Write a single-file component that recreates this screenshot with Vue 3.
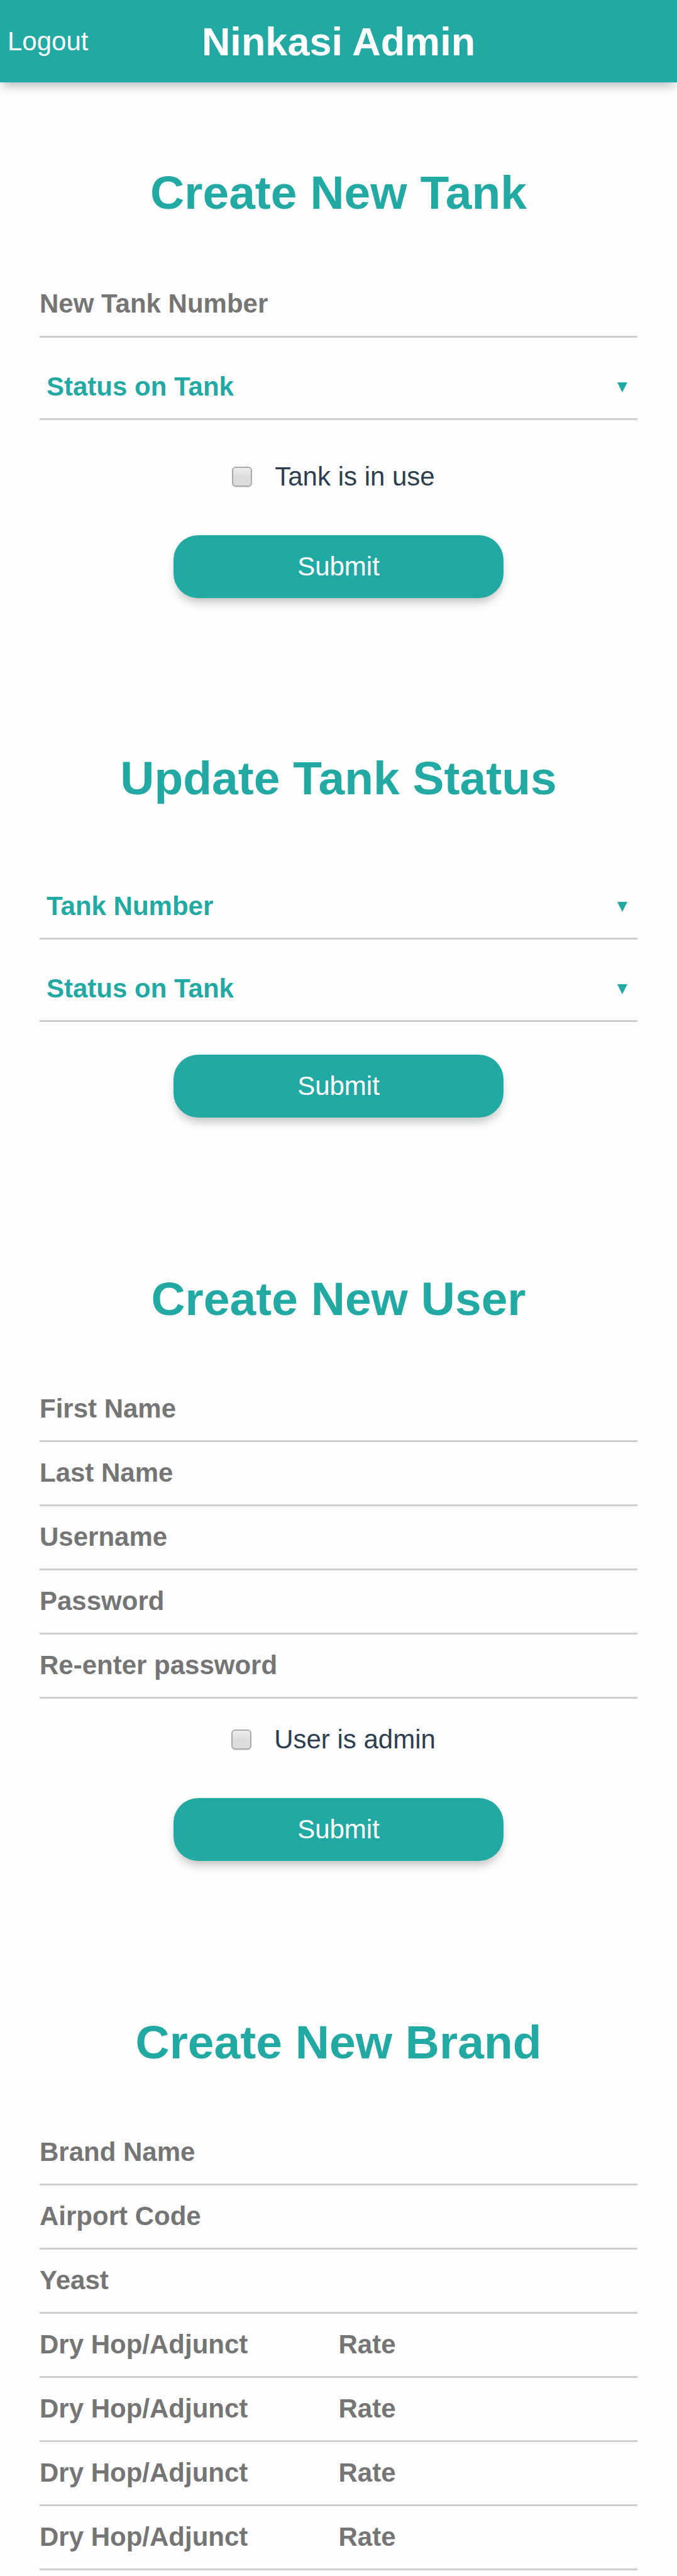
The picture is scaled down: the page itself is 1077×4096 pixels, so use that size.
<script setup>
import { reactive } from 'vue'

const statuses = ['Status on Tank']
const tankNumbers = ['Tank Number']

const userFields = [
  { key: 'firstName', label: 'First Name', type: 'text' },
  { key: 'lastName', label: 'Last Name', type: 'text' },
  { key: 'username', label: 'Username', type: 'text' },
  { key: 'password', label: 'Password', type: 'password' },
  { key: 'confirm', label: 'Re-enter password', type: 'password' },
]

const brandFields = [
  { key: 'name', label: 'Brand Name' },
  { key: 'code', label: 'Airport Code' },
  { key: 'yeast', label: 'Yeast' },
]

const newTank = reactive({ number: '', status: statuses[0], inUse: false })
const tankUpdate = reactive({ number: tankNumbers[0], status: statuses[0] })
const user = reactive({ firstName: '', lastName: '', username: '', password: '', confirm: '', admin: false })
const brand = reactive({
  name: '',
  code: '',
  yeast: '',
  additions: Array.from({ length: 4 }, () => ({ hop: '', rate: '' })),
})
</script>

<template>
  <div class="page">
    <header class="bar">
      <a class="logout" href="#">Logout</a>
      <h1 class="title">Ninkasi Admin</h1>
    </header>

    <main class="forms">
      <form class="section new-tank" @submit.prevent>
        <h2 class="heading">Create New Tank</h2>
        <input v-model="newTank.number" class="field number" type="text" placeholder="New Tank Number" aria-label="New Tank Number">
        <div class="picker">
          <select v-model="newTank.status" class="select" aria-label="Status on Tank">
            <option v-for="s in statuses" :key="s">{{ s }}</option>
          </select>
          <svg class="arrow" viewBox="0 0 16 16" aria-hidden="true"><path d="M0 0H16L8 16Z" /></svg>
        </div>
        <label class="check">
          <input v-model="newTank.inUse" class="box" type="checkbox">
          <span>Tank is in use</span>
        </label>
        <button class="submit" type="submit">Submit</button>
      </form>

      <form class="section" @submit.prevent>
        <h2 class="heading">Update Tank Status</h2>
        <div class="picker">
          <select v-model="tankUpdate.number" class="select" aria-label="Tank Number">
            <option v-for="n in tankNumbers" :key="n">{{ n }}</option>
          </select>
          <svg class="arrow" viewBox="0 0 16 16" aria-hidden="true"><path d="M0 0H16L8 16Z" /></svg>
        </div>
        <div class="picker">
          <select v-model="tankUpdate.status" class="select" aria-label="Status on Tank">
            <option v-for="s in statuses" :key="s">{{ s }}</option>
          </select>
          <svg class="arrow" viewBox="0 0 16 16" aria-hidden="true"><path d="M0 0H16L8 16Z" /></svg>
        </div>
        <button class="submit" type="submit">Submit</button>
      </form>

      <form class="section" @submit.prevent>
        <h2 class="heading">Create New User</h2>
        <input
          v-for="f in userFields"
          :key="f.key"
          v-model="user[f.key]"
          class="field"
          :type="f.type"
          :placeholder="f.label"
          :aria-label="f.label"
        >
        <label class="check">
          <input v-model="user.admin" class="box" type="checkbox">
          <span>User is admin</span>
        </label>
        <button class="submit" type="submit">Submit</button>
      </form>

      <form class="section last" @submit.prevent>
        <h2 class="heading">Create New Brand</h2>
        <input
          v-for="f in brandFields"
          :key="f.key"
          v-model="brand[f.key]"
          class="field"
          type="text"
          :placeholder="f.label"
          :aria-label="f.label"
        >
        <div v-for="(a, i) in brand.additions" :key="i" class="pair">
          <input v-model="a.hop" class="field" type="text" placeholder="Dry Hop/Adjunct" :aria-label="`Dry Hop/Adjunct ${i + 1}`">
          <input v-model="a.rate" class="field" type="text" placeholder="Rate" :aria-label="`Rate ${i + 1}`">
        </div>
      </form>
    </main>
  </div>
</template>

<style>
body {
  margin: 0;
  background: #fefefe;
}
</style>

<style scoped>
.page {
  font-family: "Liberation Sans", Arial, Helvetica, sans-serif;
  font-size: 42px;
  color: #2c3e50;
}

.bar {
  display: grid;
  grid-template-columns: 1fr auto 1fr;
  align-items: center;
  height: 131px;
  padding: 0 12px;
  background: #23a9a4;
  box-shadow: 0 10px 16px -4px rgba(0, 0, 0, 0.26);
  color: #fff;
}

.logout {
  justify-self: start;
  color: inherit;
  text-decoration: none;
}

.title {
  margin: 0;
  font-size: 63px;
}

.forms {
  padding: 0 63px;
}

.section {
  display: flex;
  flex-direction: column;
  padding: 131px 0 61px;
}

.section.new-tank {
  padding-bottom: 59px;
}

.section.last {
  padding-bottom: 9px;
}

.heading {
  margin: 0 0 82px;
  font-size: 75px;
  line-height: 88px;
  text-align: center;
  color: #23a9a4;
}

.field,
.select {
  box-sizing: border-box;
  width: 100%;
  min-width: 0;
  height: 102px;
  margin: 0;
  padding: 0 0 2px;
  border: 0;
  border-bottom: 3px solid #cecece;
  border-radius: 0;
  outline: 0;
  background: transparent;
  font: bold 42px "Liberation Sans", Arial, Helvetica, sans-serif;
  color: #23a9a4;
}

.field.number {
  height: 105px;
  padding-bottom: 0;
}

.field::placeholder {
  color: #757575;
  opacity: 1;
}

.picker {
  display: grid;
  align-items: center;
  margin-top: 29px;
}

.select {
  grid-area: 1 / 1;
  padding-left: 11px;
  appearance: none;
}

.arrow {
  grid-area: 1 / 1;
  justify-self: end;
  width: 16px;
  height: 16px;
  margin: 0 16px 3px 0;
  fill: #23a9a4;
  pointer-events: none;
}

.pair {
  display: grid;
  grid-template-columns: 1fr 1fr;
}

.check {
  display: flex;
  align-items: center;
  justify-content: center;
  gap: 36px;
  margin: 41px 0 17px;
  padding-right: 16px;
  line-height: 48px;
}

.picker + .check {
  margin-top: 66px;
}

.box {
  width: 32px;
  height: 32px;
  margin: 0;
  border: 2px solid #a9a9a9;
  border-radius: 6px;
  background: linear-gradient(#ededed, #dcdcdc 50%);
  box-shadow: 0 2px 1px rgba(0, 0, 0, 0.08);
  appearance: none;
}

.submit {
  align-self: center;
  width: 525px;
  max-width: 100%;
  height: 100px;
  margin: 52px 0;
  padding: 0;
  border: 0;
  border-radius: 39px;
  background: #23a9a4;
  box-shadow: 0 10px 16px -4px rgba(0, 0, 0, 0.26);
  font: 42px "Liberation Sans", Arial, Helvetica, sans-serif;
  color: #fff;
}
</style>
